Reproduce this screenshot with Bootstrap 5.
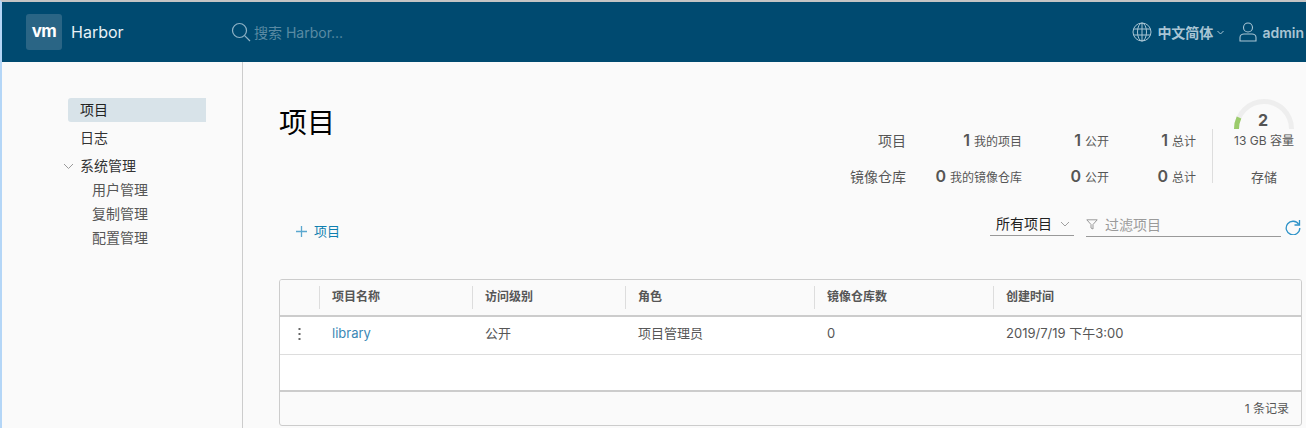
<!DOCTYPE html>
<html lang="zh-CN">
<head>
<meta charset="utf-8">
<title>Harbor</title>
<link rel="stylesheet" href="https://cdn.jsdelivr.net/npm/bootstrap@5.3.0/dist/css/bootstrap.min.css">
<style>
html,body{height:428px;overflow:hidden}
body{background:#fafafa;font-family:"Inter","Noto Sans CJK SC",sans-serif;color:#565656;font-size:13px;border-top:2px solid #c4c4c4;border-left:2px solid #b4d6f7}
.hb-top{height:60px;background:#004a70;color:#a9c5d4;padding-left:24px;padding-right:2px}
.hb-logo{width:36px;height:36px;background:#2a6585;border-radius:3px;color:#fff;font-weight:700;font-size:17px;letter-spacing:-.5px;line-height:34px;text-align:center}
.hb-name{color:#e8f1f6;font-size:16px;margin-left:9px;width:160px}
.hb-search{color:#5a8aa3;font-size:14px;gap:3px}
.hb-strong{font-weight:600;font-size:14px}
.hb-globe-txt{margin-left:5px}
.hb-person{margin-left:15px;margin-right:5px}
.hb-body{height:366px}
.hb-side{width:241px;flex:none;border-right:1px solid #ccc;padding:36px 0 0 66px;color:#333;font-size:14px;line-height:24px}
.hb-active{width:138px;height:24px;background:#d8e3e9;border-radius:3px 0 0 3px;padding-left:12px;color:#222}
.hb-link{padding-left:12px;margin-top:4px}
.hb-link.hb-parent{position:relative}
.hb-chev{position:absolute;left:-5px;top:9px}
.hb-sub{padding-left:24px;color:#565656}
.hb-main{flex:1;min-width:0;padding:0 4px 0 36px}
.hb-head{height:150px}
.hb-title{font-size:28px;font-weight:400;color:#000;margin:0;padding-top:41px;line-height:40px}
.hb-stats{padding-top:66px}
.hb-stat-row{height:30px;margin-bottom:6px}
.hb-cell{text-align:right;white-space:nowrap;font-size:12px;line-height:24px}
.hb-c1{width:116px}.hb-c2{width:87px}.hb-c3{width:87px}
.hb-lab{width:120px;text-align:right;font-size:14px;line-height:26px}
.hb-num{font-size:16px;font-weight:600;margin-right:4px;color:#555}
.hb-store{border-left:1px solid #ddd;margin-left:16px;width:90px;height:54px;margin-top:67px;position:relative;text-align:center;font-size:12px;color:#565656}
.hb-gauge{position:absolute;left:20px;top:-31px}
.hb-gnum{position:absolute;left:0;right:0;top:-21px;padding-left:11px;font-size:16px;font-weight:700;line-height:24px;color:#555}
.hb-cap{padding-left:13px;white-space:nowrap;line-height:24px}
.hb-cap+.hb-cap{margin-top:12px;font-size:13px}
.hb-tools{height:48px;margin-bottom:19px;padding-left:16px}
.hb-add{color:#0f7fb0;font-size:13px;gap:6px;margin-top:10px}
.hb-select{width:84px;height:24px;border-bottom:1px solid #999;color:#222;font-size:14px;padding:1px 0 0 6px;gap:8px;line-height:22px}
.hb-filter{width:195px;height:25px;border-bottom:1px solid #999;margin-left:12px;color:#9a9a9a;font-size:14px;gap:7px;line-height:22px;padding-top:1px}
.hb-refresh{margin:7px 1px 0 4px}
.hb-grid{width:1023px;border:1px solid #ccc;border-radius:3px;height:147px;overflow:hidden}
.hb-table{table-layout:fixed;margin:0;--bs-table-bg:transparent;font-size:13px;border-collapse:separate;border-spacing:0}
.hb-table th{background:#fafafa;font-size:12px;font-weight:600;color:#565656;padding:6px 0;border-bottom:2px solid #ccc;height:37px}
.hb-table th>div{border-left:1px solid #ddd;height:23px;line-height:22px;padding-left:12px}
.hb-table td{background:#fff;color:#565656;padding:7px 0 0 13px;height:38px;border-bottom:1px solid #ddd;vertical-align:top}
.hb-table tr.hb-blank td{height:37px;border-bottom:2px solid #ccc}
.hb-table td.hb-act{padding:11px 0 0;text-align:center}
.hb-table td.hb-act svg{display:block;margin:0 auto}
.hb-w0{width:39px}.hb-w1{width:153px}.hb-w2{width:153px}.hb-w3{width:189px}.hb-w4{width:179px}
.hb-lib{color:#3a87b5;text-decoration:none}
.hb-foot{height:33px;line-height:33px;text-align:right;padding-right:12px;font-size:12px;color:#565656}
</style>
</head>
<body>
<header class="hb-top d-flex align-items-center">
  <div class="hb-logo">vm</div>
  <div class="hb-name">Harbor</div>
  <div class="hb-search d-flex align-items-center flex-grow-1">
    <svg width="20" height="20" viewBox="0 0 20 20" fill="none" stroke="#8fb3c6" stroke-width="1.2"><circle cx="8.5" cy="8.5" r="7"/><path d="M13.6 13.6 19 19"/></svg>
    <span>搜索 Harbor...</span>
  </div>
  <div class="d-flex align-items-center">
    <svg width="20" height="20" viewBox="0 0 20 20" fill="none" stroke="#a9c5d4" stroke-width="1"><circle cx="10" cy="10" r="9"/><ellipse cx="10" cy="10" rx="4.5" ry="9"/><path d="M10 1v18M1.6 7h16.800M1.600 13h16.800"/></svg>
    <span class="hb-strong hb-globe-txt">中文简体</span>
    <svg class="ms-1" width="7" height="5" viewBox="0 0 7 5" fill="none" stroke="#a9c5d4"><path d="M.5 1 3.500 4 6.500 1"/></svg>
    <svg class="hb-person" width="18" height="20" viewBox="0 0 18 20" fill="none" stroke="#a9c5d4" stroke-width="1.100"><circle cx="9" cy="5.500" r="4.500"/><path d="M1 19v-3.500c0-2 2-3.500 4-3.500h8c2 0 4 1.500 4 3.500V19z"/></svg>
    <span class="hb-strong">admin</span>
  </div>
</header>
<div class="hb-body d-flex">
  <nav class="hb-side">
    <div class="hb-active">项目</div>
    <div class="hb-link">日志</div>
    <div class="hb-link hb-parent">
      <svg class="hb-chev" width="11" height="7" viewBox="0 0 11 7" fill="none" stroke="#9a9a9a"><path d="M1 1l4.500 4.500L10 1"/></svg>
      系统管理
    </div>
    <div class="hb-sub">用户管理</div>
    <div class="hb-sub">复制管理</div>
    <div class="hb-sub">配置管理</div>
  </nav>
  <main class="hb-main">
    <div class="hb-head d-flex justify-content-between">
      <h1 class="hb-title">项目</h1>
      <div class="d-flex">
        <div class="hb-stats d-flex flex-column">
          <div class="hb-stat-row d-flex">
            <div class="hb-lab">项目</div>
            <div class="hb-cell hb-c1"><span class="hb-num">1</span>我的项目</div>
            <div class="hb-cell hb-c2"><span class="hb-num">1</span>公开</div>
            <div class="hb-cell hb-c3"><span class="hb-num">1</span>总计</div>
          </div>
          <div class="hb-stat-row d-flex">
            <div class="hb-lab">镜像仓库</div>
            <div class="hb-cell hb-c1"><span class="hb-num">0</span>我的镜像仓库</div>
            <div class="hb-cell hb-c2"><span class="hb-num">0</span>公开</div>
            <div class="hb-cell hb-c3"><span class="hb-num">0</span>总计</div>
          </div>
        </div>
        <div class="hb-store">
          <svg class="hb-gauge" width="62" height="32" viewBox="0 0 62 32" fill="none" stroke-width="5">
            <path d="M3.500 31A27.500 27.500 0 0 1 58.500 31" stroke="#eeeeee"/>
            <path d="M3.500 31A27.500 27.500 0 0 1 6 19.500" stroke="#9bcb6b"/>
          </svg>
          <div class="hb-gnum">2</div>
          <div class="hb-cap">13 GB 容量</div>
          <div class="hb-cap">存储</div>
        </div>
      </div>
    </div>
    <div class="hb-tools d-flex justify-content-between align-items-start">
      <div class="hb-add d-flex align-items-center">
        <svg width="13" height="13" viewBox="0 0 13 13" stroke="#5aa7cf" stroke-width="1.300"><path d="M6.500 1v11M1 6.500h11"/></svg>
        <span>项目</span>
      </div>
      <div class="d-flex align-items-start">
        <div class="hb-select d-flex align-items-center">
          <span>所有项目</span>
          <svg width="10" height="6" viewBox="0 0 10 6" fill="none" stroke="#a0a0a0"><path d="M1 1l4 4 4-4"/></svg>
        </div>
        <div class="hb-filter d-flex align-items-center">
          <svg width="12" height="11" viewBox="0 0 12 11" fill="none" stroke="#999"><path d="M.8.800h10.400L7 5.500V10L5 9V5.500z"/></svg>
          <span>过滤项目</span>
        </div>
        <svg class="hb-refresh" width="16" height="16" viewBox="0 0 16 16" fill="none" stroke="#2f93c8" stroke-width="1.300"><path d="M13.800 5.500A6.800 6.800 0 1 0 14.800 9"/><path d="M14.500 1v5h-5" stroke-linejoin="miter"/></svg>
      </div>
    </div>
    <div class="hb-grid">
      <table class="table hb-table">
        <colgroup><col class="hb-w0"><col class="hb-w1"><col class="hb-w2"><col class="hb-w3"><col class="hb-w4"><col></colgroup>
        <thead>
          <tr><th></th><th><div>项目名称</div></th><th><div>访问级别</div></th><th><div>角色</div></th><th><div>镜像仓库数</div></th><th><div>创建时间</div></th></tr>
        </thead>
        <tbody>
          <tr>
            <td class="hb-act"><svg width="3" height="12" viewBox="0 0 3 12" fill="#666"><rect x=".5" width="2" height="2"/><rect x=".5" y="5" width="2" height="2"/><rect x=".5" y="10" width="2" height="2"/></svg></td>
            <td><a class="hb-lib" href="#">library</a></td><td>公开</td><td>项目管理员</td><td>0</td><td>2019/7/19 下午3:00</td>
          </tr>
          <tr class="hb-blank"><td></td><td></td><td></td><td></td><td></td><td></td></tr>
        </tbody>
      </table>
      <div class="hb-foot">1 条记录</div>
    </div>
  </main>
</div>
<script src="https://cdn.jsdelivr.net/npm/bootstrap@5.3.0/dist/js/bootstrap.bundle.min.js"></script>
</body>
</html>
